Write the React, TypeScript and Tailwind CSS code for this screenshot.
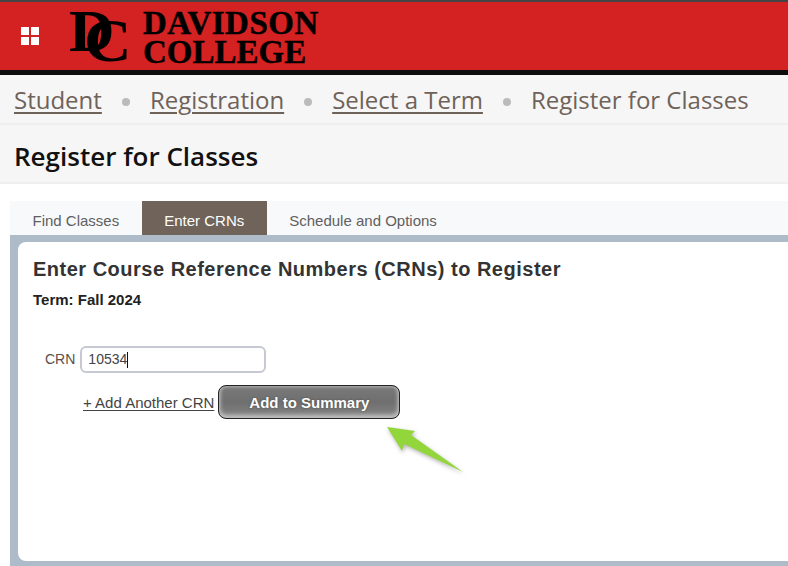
const crumbs = ["Student", "Registration", "Select a Term"];
const tabs = ["Find Classes", "Enter CRNs", "Schedule and Options"];

const Logo = () => (
  <div className="flex items-center gap-[15px]">
    <div className="relative h-[68px] w-[58px] font-['Liberation_Serif',serif] font-bold text-black">
      <span className="absolute left-[-1px] top-[-5px] origin-left scale-x-105 text-[60px] leading-[68px]">D</span>
      <span className="absolute left-[14px] top-[5px] origin-left scale-x-108 text-[61px] leading-[68px]">C</span>
    </div>
    <div className="pt-[3px] font-['Liberation_Serif',serif] text-[33px] font-bold leading-[30px] text-black [-webkit-text-stroke:0.4px_black]">
      <div className="tracking-[0.5px]">DAVIDSON</div>
      <div className="-mt-px">COLLEGE</div>
    </div>
  </div>
);

export default function App() {
  return (
    <div className="relative flex h-[566px] w-[788px] flex-col overflow-hidden bg-white font-['Liberation_Sans',sans-serif]">
      <header className="border-t-2 border-b-[5px] border-t-[#444444] border-b-[#0d0d0d] bg-[#d42121]">
        <div className="flex h-[68px] items-center pl-[21px]">
          <div className="grid w-[18px] grid-cols-2 gap-[2px]">
            <div className="h-2 w-2 bg-white" />
            <div className="h-2 w-2 bg-white" />
            <div className="h-2 w-2 bg-white" />
            <div className="h-2 w-2 bg-white" />
          </div>
          <div className="ml-[31px]">
            <Logo />
          </div>
        </div>
      </header>

      <nav className="flex h-[50px] items-center gap-5 border-b-2 border-[#efefef] bg-[#f6f6f6] pt-[2px] pl-[14px] font-['Open_Sans',sans-serif] text-[24px] text-[#6f6259]">
        {crumbs.map((c) => (
          <div key={c} className="flex items-center gap-5">
            <a href="#" className="underline decoration-2 underline-offset-[3px]">
              {c}
            </a>
            <span className="mt-1 h-2 w-2 rounded-full bg-[#bbbbbb]" />
          </div>
        ))}
        <span>Register for Classes</span>
      </nav>

      <div className="flex h-[59px] items-center border-b-2 border-[#efefef] bg-[#f6f6f6] pt-[6px] pl-[14px]">
        <h1 className="font-['Open_Sans',sans-serif] text-[26px] font-semibold text-[#111111]">Register for Classes</h1>
      </div>

      <div className="mt-[17px] ml-[10px] flex h-[34px] bg-[#f8f9fb] text-[15px]">
        {tabs.map((t, i) => (
          <div
            key={t}
            className={
              i === 1
                ? "flex items-center bg-[#70645a] px-[22.5px] pt-[6px] text-white"
                : "flex items-center px-[22.5px] pt-[6px] text-[#5f5f5f]"
            }
          >
            {t}
          </div>
        ))}
      </div>

      <main className="ml-[10px] flex flex-1 flex-col bg-[#aebbc8] pt-[7px] pb-[5px] pl-2">
        <section className="flex-1 rounded-l-lg bg-white pt-[15px] pl-[15px]">
          <h2 className="text-[20px] leading-[24px] font-bold tracking-[0.5px] text-[#333333]">
            Enter Course Reference Numbers (CRNs) to Register
          </h2>
          <p className="mt-[11px] text-[15px] leading-[16px] font-bold text-[#222222]">Term: Fall 2024</p>

          <div className="mt-[38px] flex items-center pl-3">
            <label className="text-[14px] text-[#5a4f48]">CRN</label>
            <div className="ml-[5px] flex h-[27px] w-[186px] items-center rounded-md border-2 border-[#c6c9d1] pl-[6px] text-[14px] text-[#444444]">
              10534
              <span className="h-4 w-px bg-[#111111]" />
            </div>
          </div>

          <div className="mt-3 flex items-center pl-[50px]">
            <a href="#" className="pt-[2px] text-[15px] text-[#444444] underline underline-offset-2">
              + Add Another CRN
            </a>
            <button className="ml-1 h-[34px] w-[182px] rounded-lg border border-[#222222] bg-gradient-to-b from-[#7a7a7a] via-[#6f6f6f] to-[#858585] pt-[2px] text-[15px] font-bold text-white shadow-[inset_0_-2px_4px_1px_#c4c4c4,inset_0_1px_3px_#a0a0a0] [text-shadow:0_0_2px_#444]">
              Add to Summary
            </button>
          </div>
        </section>
      </main>

      {/* green annotation arrow */}
      <svg
        className="absolute top-[420px] left-[380px] drop-shadow-[1px_2px_2px_rgba(0,0,0,0.3)]"
        width="90"
        height="60"
        viewBox="380 420 90 60"
      >
        <polygon points="387,427 415,431 411,435 463,472 404,444 402,451" fill="#92d63c" />
      </svg>
    </div>
  );
}
